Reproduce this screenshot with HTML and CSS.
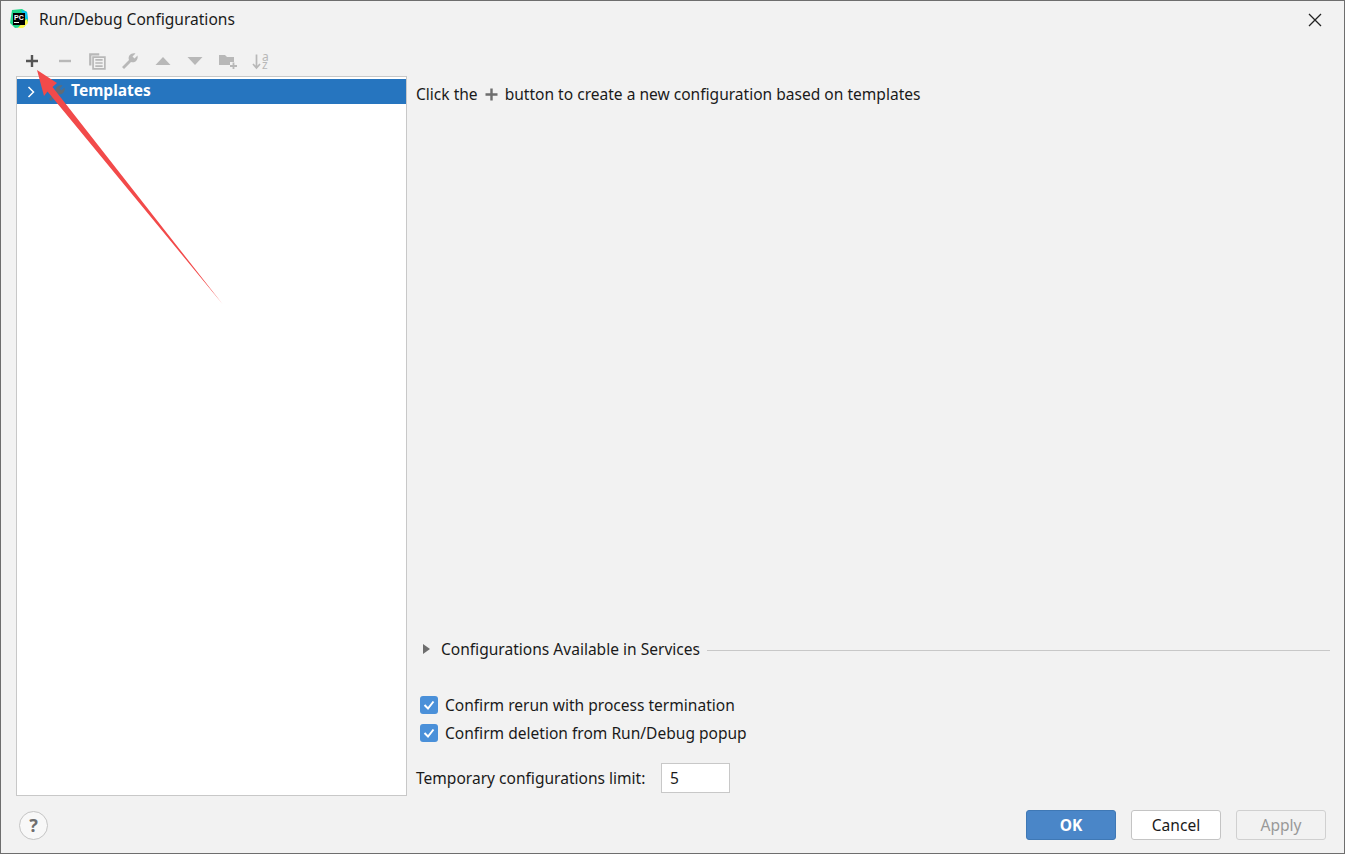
FILE: index.html
```html
<!DOCTYPE html>
<html lang="en">
<head>
  <meta charset="UTF-8">
  <title>Run/Debug Configurations</title>
  <link rel="stylesheet" href="styles.css">
</head>
<body>
  <div class="window">
    <div class="titlebar">
      <svg class="app-logo" width="20" height="20" viewBox="0 0 20 20">
        <path d="M3 1 L13 0 L18 3 L19 12 L15 18 L6 19 L1 14 Z" fill="#21d789"/>
        <path d="M12 1 L18 3 L19 11 L15 8 Z" fill="#07c3f2"/>
        <path d="M18 10 L19 14 L14 19 L9 19 L14 13 Z" fill="#fcf84a"/>
        <rect x="4" y="4" width="12" height="12" fill="#000"/>
        <text x="5" y="10.5" class="logo-text">PC</text>
        <rect x="5" y="13" width="5" height="1" fill="#fff"/>
      </svg>
      <span class="title">Run/Debug Configurations</span>
      <svg class="close" width="14" height="14" viewBox="0 0 14 14">
        <path d="M1 1 L13 13 M13 1 L1 13" stroke="#222" stroke-width="1.3" fill="none"/>
      </svg>
    </div>

    <div class="main">
      <div class="left">
        <div class="toolbar">
          <svg width="14" height="14" viewBox="0 0 14 14"><path d="M1 7 H13 M7 1 V13" stroke="#555" stroke-width="2.4"/></svg>
          <svg width="14" height="14" viewBox="0 0 14 14"><path d="M1 7 H13" stroke="#b8b8b8" stroke-width="2.4"/></svg>
          <svg width="18" height="18" viewBox="0 0 16 16"><path d="M1 1 H10 V3 H3 V12 H1 Z" fill="#b8b8b8"/><path d="M4.5 4.5 H15 V15 H4.5 Z M6.5 7 H13 M6.5 9.8 H13 M6.5 12.6 H13" fill="none" stroke="#b8b8b8" stroke-width="1.5"/></svg>
          <svg width="18" height="18" viewBox="0 0 18 18"><path d="M1 15 L8 8 C6.5 4 10 0.5 14.5 1.5 L11.5 4.5 L13.5 6.5 L16.5 3.5 C17.5 8 14 11.5 10 10 L3 17 Z" fill="#b8b8b8"/></svg>
          <svg width="16" height="16" viewBox="0 0 16 16"><path d="M0.5 12 L8 4 L15.5 12 Z" fill="#b8b8b8"/></svg>
          <svg width="16" height="16" viewBox="0 0 16 16"><path d="M0.5 4 L8 12 L15.5 4 Z" fill="#b8b8b8"/></svg>
          <svg width="18" height="16" viewBox="0 0 18 16"><path d="M0 2 H6 L8 4 H15 V9 H11 V12 H0 Z" fill="#b8b8b8"/><path d="M11 13 H18 M14.5 9.5 V16" stroke="#b8b8b8" stroke-width="1.8"/></svg>
          <span class="sort-icon">
            <svg width="9" height="17" viewBox="0 0 9 16"><path d="M4.5 1 V14 M1 10.5 L4.5 14.5 L8 10.5" fill="none" stroke="#b8b8b8" stroke-width="1.7"/></svg>
            <span class="sort-letters">a<br>z</span>
          </span>
        </div>
        <div class="tree">
          <div class="tree-row">
            <svg class="tree-arrow" width="8" height="12" viewBox="0 0 8 12"><path d="M1.5 1 L6.5 6 L1.5 11" fill="none" stroke="#fff" stroke-width="1.5"/></svg>
            <svg class="tree-icon" width="18" height="18" viewBox="0 0 18 18"><path d="M1 15 L8 8 C6.5 4 10 0.5 14.5 1.5 L11.5 4.5 L13.5 6.5 L16.5 3.5 C17.5 8 14 11.5 10 10 L3 17 Z" fill="#5f6b78"/></svg>
            <span class="tree-label">Templates</span>
          </div>
        </div>
      </div>

      <div class="right">
        <div class="hint">
          <span>Click the</span>
          <svg width="13" height="13" viewBox="0 0 13 13"><path d="M0.5 6.5 H12.5 M6.5 0.5 V12.5" stroke="#6e6e6e" stroke-width="2.4"/></svg>
          <span>button to create a new configuration based on templates</span>
        </div>

        <div class="bottom">
          <div class="services">
            <svg width="7" height="10" viewBox="0 0 7 10"><path d="M0 0 L7 5 L0 10 Z" fill="#6e6e6e"/></svg>
            <span>Configurations Available in Services</span>
            <div class="services-line"></div>
          </div>
          <label class="check">
            <svg width="18" height="18" viewBox="0 0 18 18"><rect width="18" height="18" rx="3" fill="#4a90d9"/><path d="M4.5 9 L8 12.5 L13.5 5.5" fill="none" stroke="#fff" stroke-width="2"/></svg>
            <span>Confirm rerun with process termination</span>
          </label>
          <label class="check">
            <svg width="18" height="18" viewBox="0 0 18 18"><rect width="18" height="18" rx="3" fill="#4a90d9"/><path d="M4.5 9 L8 12.5 L13.5 5.5" fill="none" stroke="#fff" stroke-width="2"/></svg>
            <span>Confirm deletion from Run/Debug popup</span>
          </label>
          <div class="limit">
            <span>Temporary configurations limit:</span>
            <div class="limit-input">5</div>
          </div>
        </div>
      </div>
    </div>

    <div class="footer">
      <div class="help">?</div>
      <div class="buttons">
        <div class="btn btn-ok">OK</div>
        <div class="btn">Cancel</div>
        <div class="btn btn-off">Apply</div>
      </div>
    </div>

    <svg class="annotation" width="1345" height="854" viewBox="0 0 1345 854">
      <path d="M37 70 L57 83 L52.5 87 L222.5 304 L47.5 91.5 L44 96 Z" fill="#f24a4a"/>
    </svg>
  </div>
</body>
</html>
```

FILE: styles.css
```css
html, body {
  margin: 0;
  padding: 0;
}
body {
  font-family: "Noto Sans", "Open Sans", sans-serif;
  font-size: 15.55px;
  color: #1a1a1a;
  background: #f2f2f2;
}
.window {
  position: relative;
  box-sizing: border-box;
  width: 1345px;
  height: 854px;
  border: 1px solid #6e6e6e;
  background: #f2f2f2;
  display: flex;
  flex-direction: column;
  overflow: hidden;
}

/* title bar */
.titlebar {
  height: 37px;
  display: flex;
  align-items: center;
  padding: 0 22px 0 8px;
  flex: none;
}
.app-logo {
  margin-right: 10px;
  margin-bottom: 2px;
}
.logo-text {
  font-family: "Liberation Sans", sans-serif;
  font-size: 7px;
  font-weight: bold;
  fill: #fff;
}
.title {
  flex: 1;
  padding-bottom: 1px;
}
.close {
  display: block;
}

/* main area */
.main {
  flex: 1;
  display: flex;
  min-height: 0;
  padding-left: 15px;
}
.left {
  width: 391px;
  flex: none;
  display: flex;
  flex-direction: column;
}
.toolbar {
  height: 38px;
  box-sizing: border-box;
  padding-top: 8px;
  display: grid;
  grid-template-columns: repeat(8, 32.6px);
  align-items: center;
  justify-items: center;
  flex: none;
}
.sort-icon {
  display: flex;
  align-items: center;
}
.sort-letters {
  font-size: 12px;
  line-height: 8px;
  color: #b8b8b8;
  margin-left: 1px;
}
.tree {
  flex: 1;
  background: #fff;
  border: 1px solid #c8c8c8;
  padding-top: 2px;
}
.tree-row {
  height: 25px;
  background: #2675bf;
  color: #fff;
  font-weight: 700;
  display: flex;
  align-items: center;
  padding-left: 10px;
}
.tree-arrow {
  margin-right: 13px;
}
.tree-icon {
  margin-right: 5px;
  margin-top: 3px;
}
.tree-label {
  padding-bottom: 3px;
}

.right {
  flex: 1;
  display: flex;
  flex-direction: column;
  padding: 0 14px 0 9px;
  min-width: 0;
}
.hint {
  margin-top: 44px;
  height: 24px;
  display: flex;
  align-items: center;
  gap: 7px;
}
.bottom {
  margin-top: auto;
}
.services {
  display: flex;
  align-items: center;
  height: 24px;
  padding-left: 7px;
}
.services span {
  margin-left: 11px;
  margin-right: 7px;
}
.services-line {
  flex: 1;
  height: 1px;
  background: #c8c8c8;
  margin-top: 2px;
}
.check {
  display: flex;
  align-items: center;
  height: 28px;
  padding-left: 4px;
}
.check svg {
  margin-right: 7px;
}
.services + .check {
  margin-top: 30px;
}
.limit {
  display: flex;
  align-items: center;
  margin-top: 16px;
  margin-bottom: 3px;
}
.limit span {
  width: 245px;
}
.limit-input {
  box-sizing: border-box;
  width: 69px;
  height: 30px;
  line-height: 28px;
  padding-left: 8px;
  background: #fff;
  border: 1px solid #c8c8c8;
}

/* footer */
.footer {
  height: 57px;
  flex: none;
  display: flex;
  align-items: center;
  justify-content: space-between;
  padding: 1px 18px 0;
  box-sizing: border-box;
}
.help {
  box-sizing: border-box;
  width: 29px;
  height: 29px;
  border: 1px solid #c4c4c4;
  border-radius: 50%;
  background: #f8f8f8;
  text-align: center;
  line-height: 26px;
  font-size: 18px;
  font-weight: 700;
  color: #6e6e6e;
}
.buttons {
  display: flex;
  gap: 15px;
}
.btn {
  box-sizing: border-box;
  width: 90px;
  height: 30px;
  line-height: 28px;
  text-align: center;
  background: #fff;
  border: 1px solid #c4c4c4;
  border-radius: 3px;
}
.btn-ok {
  background: #4a86c8;
  border-color: #3f78b5;
  color: #fff;
  font-weight: 700;
}
.btn-off {
  background: #f2f2f2;
  border-color: #d0d0d0;
  color: #999;
}

/* red arrow drawn over the screenshot */
.annotation {
  position: absolute;
  left: -1px;
  top: -1px;
  pointer-events: none;
}
```
